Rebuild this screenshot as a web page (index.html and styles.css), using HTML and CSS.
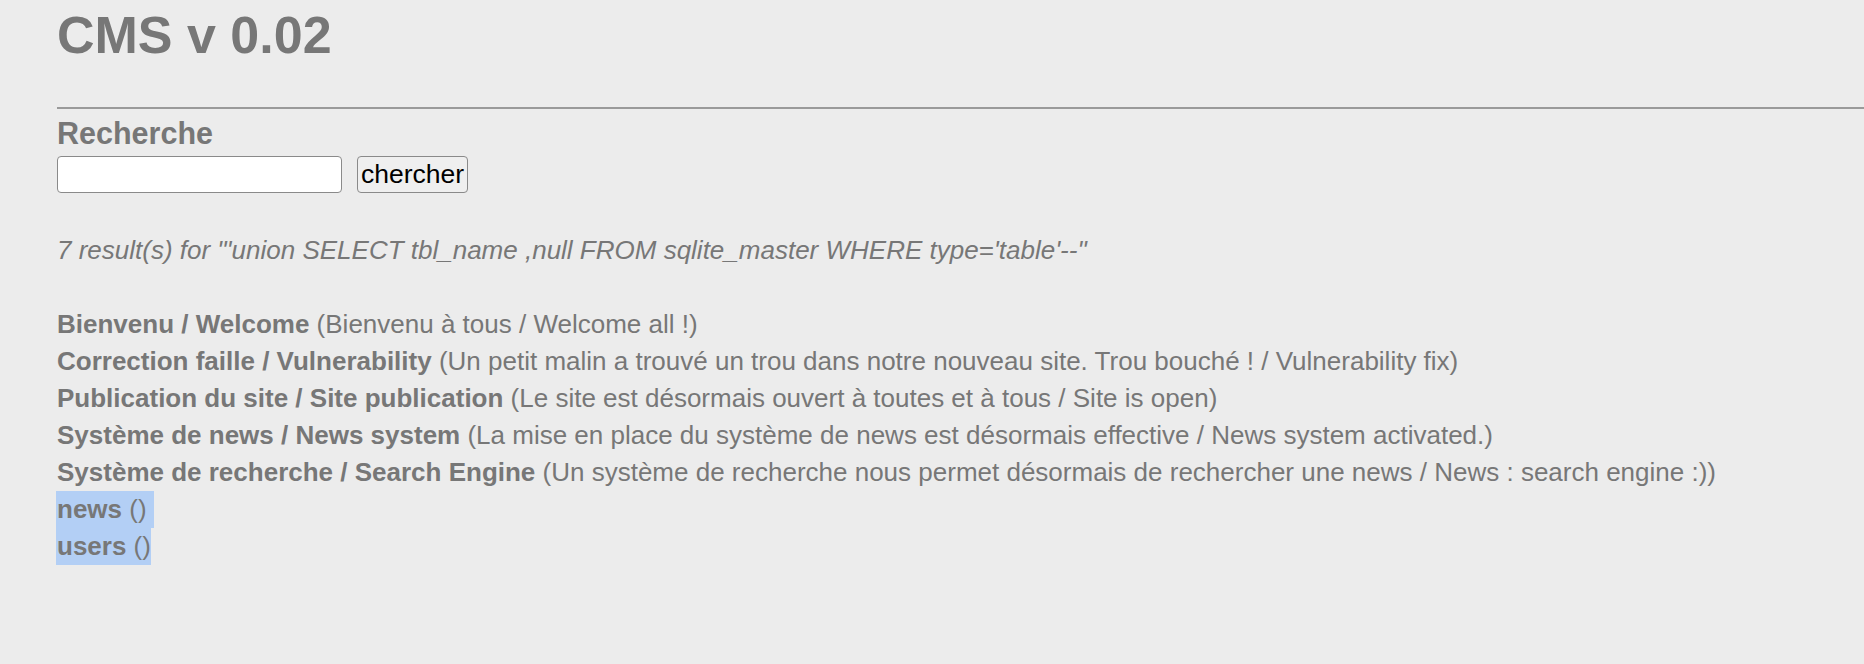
FILE: index.html
```html
<!DOCTYPE html>
<html lang="fr">
<head>
<meta charset="utf-8">
<title>CMS v 0.02</title>
<link rel="stylesheet" href="styles.css">
</head>
<body>
<div class="page">
  <h1 class="title">CMS v 0.02</h1>
  <hr class="rule">
  <h3 class="search-title">Recherche</h3>
  <form class="search-form">
    <input class="search-input" type="text" name="recherche">
    <button class="search-btn" type="button">chercher</button>
  </form>
  <p class="summary">7 result(s) for "'union SELECT tbl_name ,null FROM sqlite_master WHERE type='table'--"</p>
  <div class="results">
    <div class="row"><b>Bienvenu / Welcome</b> (Bienvenu à tous / Welcome all !)</div>
    <div class="row"><b>Correction faille / Vulnerability</b> (Un petit malin a trouvé un trou dans notre nouveau site. Trou bouché ! / Vulnerability fix)</div>
    <div class="row"><b>Publication du site / Site publication</b> (Le site est désormais ouvert à toutes et à tous / Site is open)</div>
    <div class="row"><b>Système de news / News system</b> (La mise en place du système de news est désormais effective / News system activated.)</div>
    <div class="row"><b>Système de recherche / Search Engine</b> (Un système de recherche nous permet désormais de rechercher une news / News : search engine :))</div>
    <div class="row"><span class="sel sel-a"><b>news</b> ()&nbsp;</span></div>
    <div class="row"><span class="sel sel-b"><b>users</b> ()</span></div>
  </div>
</div>
</body>
</html>
```

FILE: styles.css
```css
html, body {
  margin: 0;
  padding: 0;
  background: #ececec;
}
body {
  color: #777777;
  font-family: "Liberation Sans", Arial, Helvetica, sans-serif;
}
.page {
  padding-left: 57px;
}
.title {
  margin: 5px 0 0 0;
  font-size: 52px;
  font-weight: bold;
  line-height: 60px;
}
.rule {
  margin: 42px 0 0 0;
  border: 0;
  height: 2px;
  background: #9a9a9a;
}
.search-title {
  margin: 7px 0 0 0;
  font-size: 30.5px;
  font-weight: bold;
  line-height: 34px;
}
.search-form {
  display: flex;
  align-items: center;
  gap: 15px;
  margin: 6px 0 0 0;
}
.search-input {
  box-sizing: border-box;
  width: 285px;
  height: 37px;
  margin: 0;
  background: #ffffff;
  border: 1px solid #8a8a8a;
  border-radius: 4px;
}
.search-btn {
  box-sizing: border-box;
  width: 111px;
  height: 37px;
  margin: 0;
  padding: 0;
  background: #efefef;
  border: 1px solid #8a8a8a;
  border-radius: 4px;
  color: #000000;
  font-family: "Liberation Sans", Arial, Helvetica, sans-serif;
  font-size: 26.5px;
  line-height: 35px;
}
.summary {
  margin: 39px 0 0 0;
  font-size: 26px;
  font-style: italic;
  line-height: 37px;
}
.results {
  margin-top: 37px;
  font-size: 26px;
  line-height: 37px;
}
.row {
  white-space: nowrap;
}
.sel {
  display: inline-block;
  background: #b3cff5;
  margin-left: -1px;
  padding-left: 1px;
}
```
